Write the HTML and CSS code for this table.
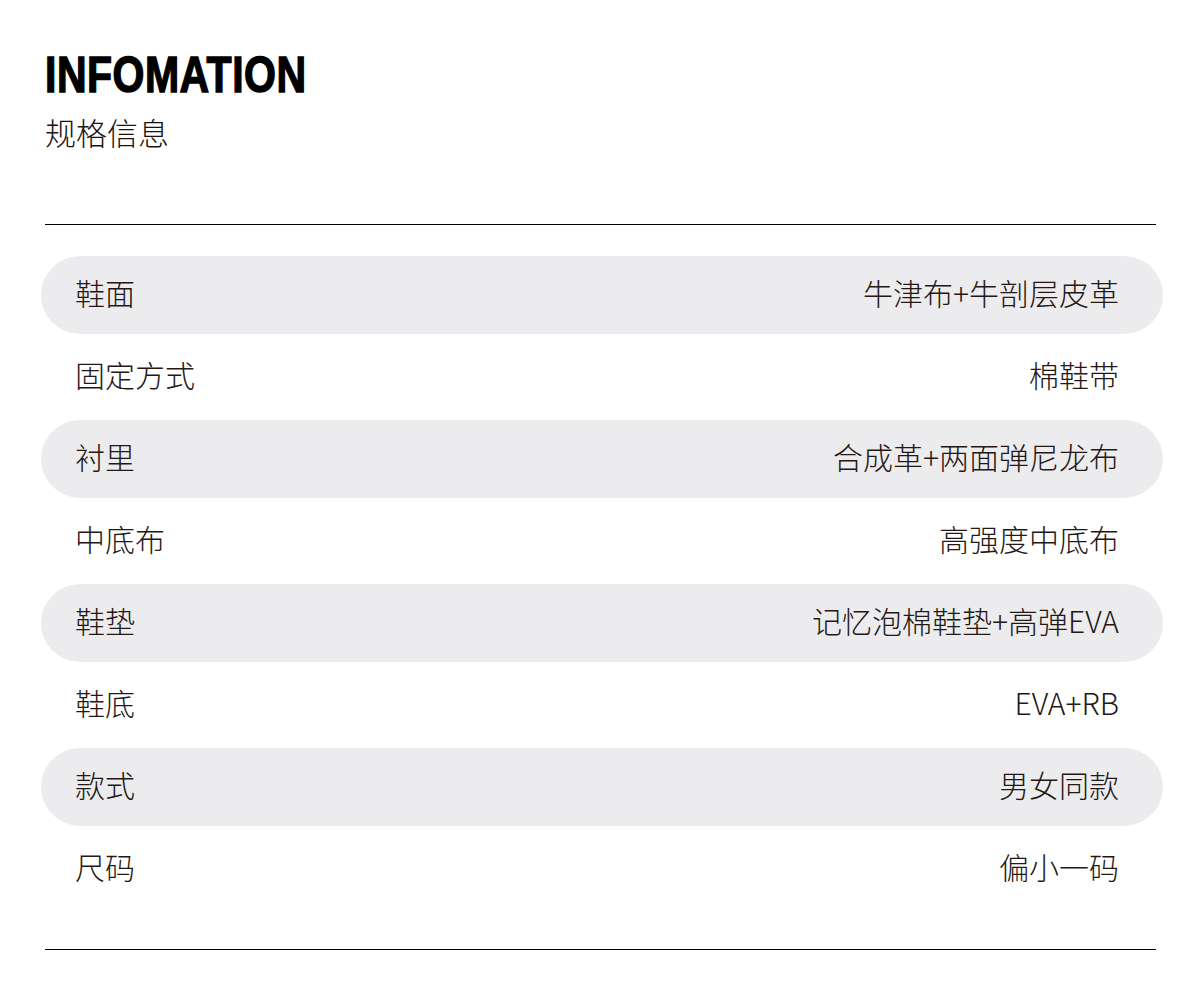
FILE: index.html
```html
<!DOCTYPE html>
<html lang="zh-CN">
<head>
<meta charset="utf-8">
<title>INFOMATION 规格信息</title>
<link rel="stylesheet" href="styles.css">
</head>
<body>
<main class="page">
  <header class="head">
    <h1 class="title"><span class="title-text">INFOMATION</span></h1>
    <p class="subtitle">规格信息</p>
  </header>
  <hr class="rule">
  <ul class="specs">
    <li class="spec shaded"><span class="label">鞋面</span><span class="value">牛津布+牛剖层皮革</span></li>
    <li class="spec"><span class="label">固定方式</span><span class="value">棉鞋带</span></li>
    <li class="spec shaded"><span class="label">衬里</span><span class="value">合成革+两面弹尼龙布</span></li>
    <li class="spec"><span class="label">中底布</span><span class="value">高强度中底布</span></li>
    <li class="spec shaded"><span class="label">鞋垫</span><span class="value">记忆泡棉鞋垫+高弹EVA</span></li>
    <li class="spec"><span class="label">鞋底</span><span class="value">EVA+RB</span></li>
    <li class="spec shaded"><span class="label">款式</span><span class="value">男女同款</span></li>
    <li class="spec"><span class="label">尺码</span><span class="value">偏小一码</span></li>
  </ul>
  <hr class="rule rule-bottom">
</main>
</body>
</html>
```

FILE: styles.css
```css
* { box-sizing: border-box; }
html, body { margin: 0; padding: 0; background: #ffffff; }
body {
  font-family: "Noto Sans CJK SC", "Noto Sans", sans-serif;
  font-weight: 300;
  color: #231815;
}
.page {
  width: 1111px;
  margin-left: 45px;
  padding-top: 50px;
}
.head { height: 174px; }
.title {
  margin: 0;
  font-family: "Liberation Sans", Arial, sans-serif;
  font-weight: 700;
  font-size: 50px;
  line-height: 50px;
  color: #000;
}
.title-text {
  display: inline-block;
  transform: scaleX(0.82);
  transform-origin: left center;
  letter-spacing: 0.6px;
  -webkit-text-stroke: 1.4px #000;
}
.subtitle {
  margin: 12px 0 0 0;
  font-size: 31px;
  line-height: 40px;
  color: #1a1311;
}
.rule {
  margin: 0;
  border: 0;
  border-top: 1px solid #000;
  height: 0;
}
.specs {
  list-style: none;
  margin: 31px -7px 0 -4px;
  padding: 0;
  display: flex;
  flex-direction: column;
  gap: 4px;
}
.spec {
  height: 78px;
  border-radius: 39px;
  display: flex;
  align-items: center;
  justify-content: space-between;
  padding: 0 44px 6px 34px;
  font-size: 30px;
  line-height: 40px;
}
.spec.shaded { background: #ececee; }
.rule-bottom { margin-top: 41px; }
```
